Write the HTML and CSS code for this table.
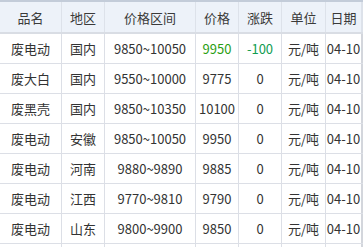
FILE: index.html
```html
<!DOCTYPE html>
<html lang="zh">
<head>
<meta charset="utf-8">
<link rel="stylesheet" href="styles.css">
</head>
<body>
<div class="table">
  <div class="row head">
    <div class="c">品名</div><div class="c">地区</div><div class="c">价格区间</div><div class="c">价格</div><div class="c">涨跌</div><div class="c">单位</div><div class="c">日期</div>
  </div>
  <div class="row">
    <div class="c">废电动</div><div class="c">国内</div><div class="c">9850~10050</div><div class="c down">9950</div><div class="c down2">-100</div><div class="c">元/吨</div><div class="c">04-10</div>
  </div>
  <div class="row">
    <div class="c">废大白</div><div class="c">国内</div><div class="c">9550~10000</div><div class="c">9775</div><div class="c">0</div><div class="c">元/吨</div><div class="c">04-10</div>
  </div>
  <div class="row">
    <div class="c">废黑壳</div><div class="c">国内</div><div class="c">9850~10350</div><div class="c">10100</div><div class="c">0</div><div class="c">元/吨</div><div class="c">04-10</div>
  </div>
  <div class="row">
    <div class="c">废电动</div><div class="c">安徽</div><div class="c">9850~10050</div><div class="c">9950</div><div class="c">0</div><div class="c">元/吨</div><div class="c">04-10</div>
  </div>
  <div class="row">
    <div class="c">废电动</div><div class="c">河南</div><div class="c">9880~9890</div><div class="c">9885</div><div class="c">0</div><div class="c">元/吨</div><div class="c">04-10</div>
  </div>
  <div class="row">
    <div class="c">废电动</div><div class="c">江西</div><div class="c">9770~9810</div><div class="c">9790</div><div class="c">0</div><div class="c">元/吨</div><div class="c">04-10</div>
  </div>
  <div class="row">
    <div class="c">废电动</div><div class="c">山东</div><div class="c">9800~9900</div><div class="c">9850</div><div class="c">0</div><div class="c">元/吨</div><div class="c">04-10</div>
  </div>
  <div class="row tail">
    <div class="c"></div><div class="c"></div><div class="c"></div><div class="c"></div><div class="c"></div><div class="c"></div><div class="c"></div>
  </div>
</div>
</body>
</html>
```

FILE: styles.css
```css
html, body {
  margin: 0;
  padding: 0;
  background: #ffffff;
  overflow: hidden;
}
body {
  font-family: "Noto Sans CJK SC", "Noto Sans", sans-serif;
  font-size: 13px;
  color: #333333;
}
.table {
  width: 363px;
  height: 247px;
  overflow: hidden;
  border-top: 2px solid #c3ccd9;
  box-sizing: border-box;
}
.row {
  display: grid;
  grid-template-columns: 62px 43px 91px 43px 43px 44px 37px;
  height: 30px;
  border-bottom: 1px solid #dcdfe6;
  box-sizing: border-box;
}
.row.head {
  background: #edf2f9;
  height: 32px;
  border-bottom: 2px solid #d9dde4;
  color: #3a3a3a;
}
.row.tail {
  border-bottom: none;
}
.c {
  box-sizing: border-box;
  border-right: 1px solid #dcdfe6;
  display: flex;
  align-items: center;
  justify-content: center;
  white-space: nowrap;
  overflow: hidden;
  line-height: 1;
}
.row.head .c {
  border-right-color: #dde2ea;
}
.c:last-child {
  border-right: 2px solid #d3d6dc;
}
.down {
  color: #2a9e12;
}
.down2 {
  color: #109c50;
}
```
